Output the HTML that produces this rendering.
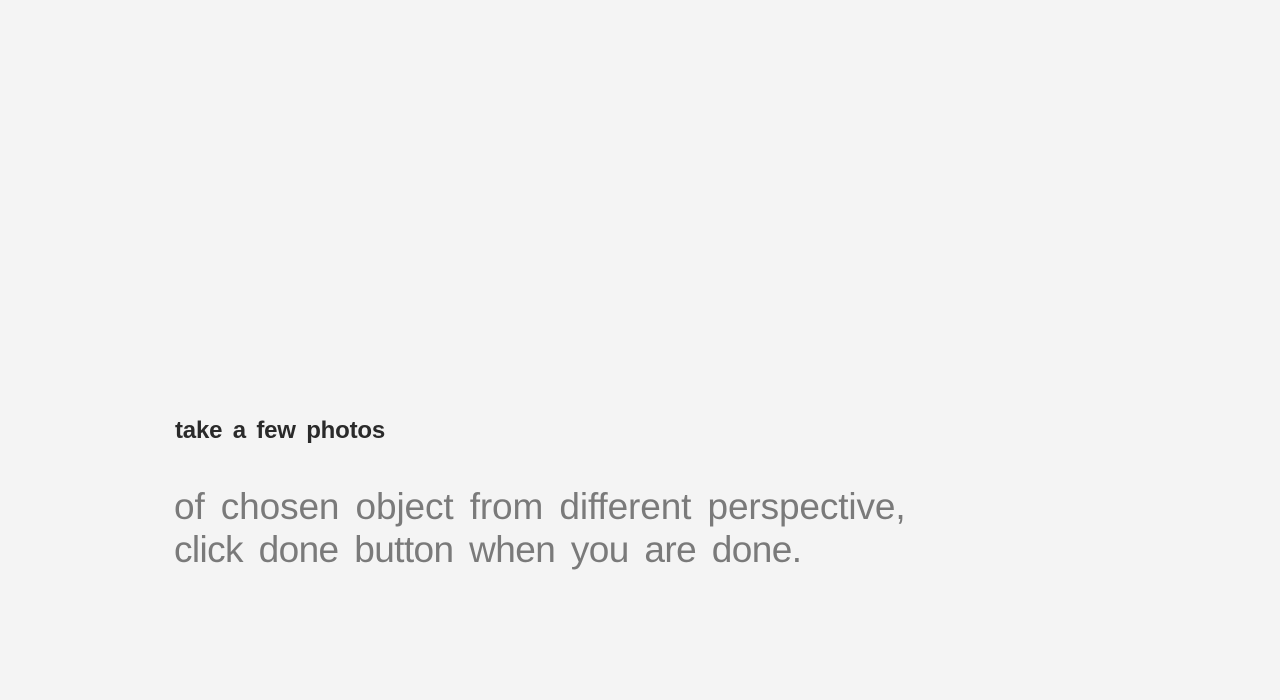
<!DOCTYPE html>
<html><head><meta charset="utf-8"><style>
html,body{margin:0;padding:0;background:#f4f4f4;width:1280px;height:700px;overflow:hidden}
.h{position:absolute;left:175px;top:416px;font:bold 24px/30px "Liberation Sans",sans-serif;color:#2a2a2a;word-spacing:4px;letter-spacing:-0.2px}
.b{position:absolute;left:174px;top:485px;font:300 37px/43px "Liberation Sans",sans-serif;color:#7a7a7a;word-spacing:6px;letter-spacing:-0.6px;white-space:nowrap}
.l1{letter-spacing:-0.12px}
</style></head><body>
<div class="h">take a few photos</div>
<div class="b"><span class="l1">of chosen object from different perspective,</span><br>click done button when you are done.</div>
</body></html>
